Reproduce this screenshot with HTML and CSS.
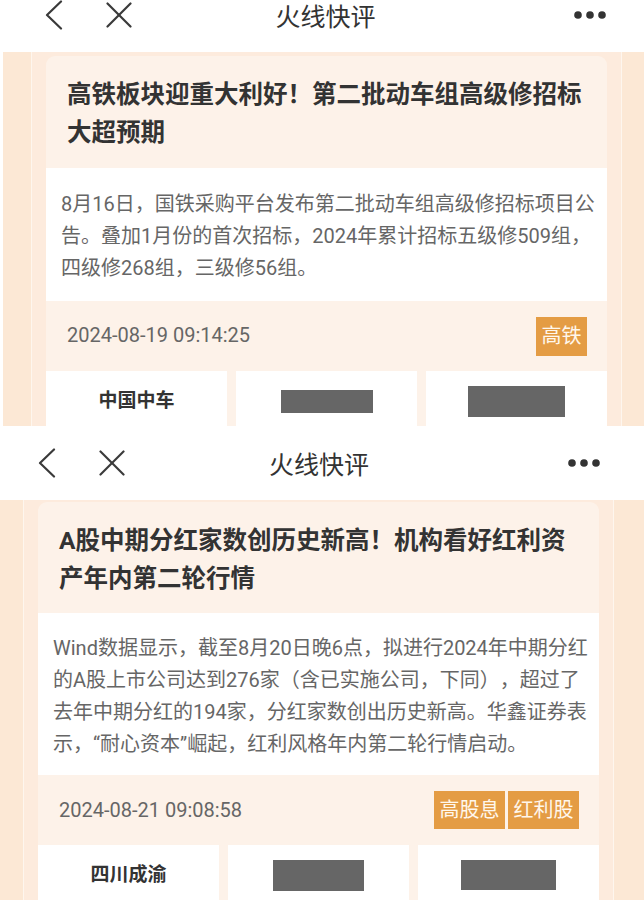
FILE: index.html
```html
<!DOCTYPE html>
<html lang="zh-CN">
<head>
<meta charset="utf-8">
<title>火线快评</title>
<link rel="stylesheet" href="styles.css">
</head>
<body>
<section class="shot shot-a">
  <header class="topbar">
    <div class="topbar-left">
      <svg class="icon-back" viewBox="0 0 18 30" width="18" height="30"><polyline points="16,1.5 2,15 16,28.5" /></svg>
      <svg class="icon-close" viewBox="0 0 26 26" width="26" height="26"><line x1="1.5" y1="1.5" x2="24.5" y2="24.5" /><line x1="24.5" y1="1.5" x2="1.5" y2="24.5" /></svg>
    </div>
    <h1 class="topbar-title">火线快评</h1>
    <div class="topbar-right">
      <svg class="icon-more" viewBox="0 0 32 8" width="32" height="8"><circle cx="4" cy="4" r="3.8" /><circle cx="16" cy="4" r="3.8" /><circle cx="28" cy="4" r="3.8" /></svg>
    </div>
  </header>
  <div class="feed">
    <div class="frame">
      <article class="card">
        <h2 class="card-title">高铁板块迎重大利好！第二批动车组高级修招标大超预期</h2>
        <p class="card-body">8月16日，国铁采购平台发布第二批动车组高级修招标项目公告。叠加1月份的首次招标，2024年累计招标五级修509组，四级修268组，三级修56组。</p>
        <div class="card-foot">
          <span class="card-date">2024-08-19 09:14:25</span>
          <div class="tags"><span class="tag">高铁</span></div>
        </div>
        <div class="stocks">
          <div class="stock"><div class="stock-line"><span class="stock-name">中国中车</span></div></div>
          <div class="stock"><div class="stock-line"><span class="redact redact-1"></span></div></div>
          <div class="stock"><div class="stock-line"><span class="redact redact-2"></span></div></div>
        </div>
      </article>
    </div>
  </div>
</section>
<section class="shot shot-b">
  <header class="topbar">
    <div class="topbar-left">
      <svg class="icon-back" viewBox="0 0 18 30" width="18" height="30"><polyline points="16,1.5 2,15 16,28.5" /></svg>
      <svg class="icon-close" viewBox="0 0 26 26" width="26" height="26"><line x1="1.5" y1="1.5" x2="24.5" y2="24.5" /><line x1="24.5" y1="1.5" x2="1.5" y2="24.5" /></svg>
    </div>
    <h1 class="topbar-title">火线快评</h1>
    <div class="topbar-right">
      <svg class="icon-more" viewBox="0 0 32 8" width="32" height="8"><circle cx="4" cy="4" r="3.8" /><circle cx="16" cy="4" r="3.8" /><circle cx="28" cy="4" r="3.8" /></svg>
    </div>
  </header>
  <div class="feed">
    <div class="frame">
      <article class="card">
        <h2 class="card-title">A股中期分红家数创历史新高！机构看好红利资产年内第二轮行情</h2>
        <p class="card-body">Wind数据显示，截至8月20日晚6点，拟进行2024年中期分红的A股上市公司达到276家（含已实施公司，下同），超过了去年中期分红的194家，分红家数创出历史新高。华鑫证券表示，“耐心资本”崛起，红利风格年内第二轮行情启动。</p>
        <div class="card-foot">
          <span class="card-date">2024-08-21 09:08:58</span>
          <div class="tags"><span class="tag">高股息</span><span class="tag">红利股</span></div>
        </div>
        <div class="stocks">
          <div class="stock"><div class="stock-line"><span class="stock-name">四川成渝</span></div></div>
          <div class="stock"><div class="stock-line"><span class="redact redact-3"></span></div></div>
          <div class="stock"><div class="stock-line"><span class="redact redact-4"></span></div></div>
        </div>
      </article>
    </div>
  </div>
</section>
</body>
</html>
```
FILE: styles.css
```css
* { box-sizing: border-box; }

html, body {
  margin: 0;
  padding: 0;
  background: #ffffff;
}

body {
  width: 644px;
  font-family: Roboto, "Noto Sans CJK SC", sans-serif;
  color: #333333;
  text-spacing-trim: space-all;
}

.shot {
  overflow: hidden;
  background: #ffffff;
}

.shot-a { height: 426px; }
.shot-b { height: 474px; }

/* top navigation bar */
.topbar {
  height: 74px;
  display: grid;
  grid-template-columns: 1fr auto 1fr;
  align-items: center;
  background: #ffffff;
}

.shot-a .topbar {
  margin-top: -22px;
  padding: 0 38px 0 45px;
}

.shot-b .topbar {
  padding: 0 44px 0 38px;
}

.topbar-left {
  display: flex;
  align-items: center;
  gap: 43px;
}

.topbar-right {
  display: flex;
  justify-content: flex-end;
  align-items: center;
}

.topbar-title {
  margin: 0;
  font-family: "Noto Sans CJK SC", sans-serif;
  font-size: 25px;
  font-weight: 400;
  line-height: 25px;
  color: #333333;
}

.icon-back polyline,
.icon-close line {
  fill: none;
  stroke: #3a3a3a;
  stroke-width: 2.2;
  stroke-linecap: round;
  stroke-linejoin: round;
}

.icon-back, .icon-close, .icon-more { display: block; }

.icon-more circle { fill: #333333; }

/* feed background */
.feed {
  background: #fce8d5;
}

.shot-a .feed {
  margin-left: 3px;
  padding-left: 28px;
}

.shot-b .feed {
  padding-left: 23px;
}

.frame {
  width: 591px;
  background: #fdebdd;
  border-left: 1px solid #fef6ee;
  border-right: 1px solid #fef6ee;
  padding: 4px 14px 200px;
}

.shot-b .frame { padding-top: 2px; }

/* card */
.card {
  background: #fdf2e9;
  border-radius: 9px 9px 0 0;
}

.card-title {
  margin: 0;
  padding: 20px 21px 16px 21px;
  font-family: Roboto, "Noto Sans CJK SC", sans-serif;
  font-size: 24.5px;
  font-weight: 700;
  line-height: 38px;
  color: #333333;
}

.shot-b .card-title { padding-bottom: 15px; }

.card-body {
  margin: 0;
  background: #ffffff;
  padding: 20px 10px 17px 15px;
  font-size: 20px;
  line-height: 32px;
  color: #666666;
}

.shot-b .card-body { padding-top: 19px; padding-bottom: 15px; }

.card-foot {
  height: 70px;
  display: flex;
  align-items: center;
  justify-content: space-between;
  padding: 0 20px 0 21px;
}

.card-date {
  font-size: 20px;
  line-height: 24px;
  color: #666666;
}

.shot-a .card-date { margin-top: -3px; }

.tags {
  display: flex;
  gap: 3px;
}

.tag {
  display: block;
  padding: 0 5.5px;
  height: 39px;
  line-height: 39px;
  font-size: 20px;
  background: #e49c44;
  color: #fff7ec;
}

.shot-b .tag {
  height: 38px;
  line-height: 38px;
}

/* related stocks */
.stocks {
  display: grid;
  grid-template-columns: repeat(3, 1fr);
  gap: 9px;
}

.stock {
  background: #ffffff;
  padding: 18px 0 40px;
}

.stock-line {
  height: 24px;
  display: flex;
  align-items: center;
  justify-content: center;
}

.stock-name {
  font-size: 19px;
  font-weight: 700;
  line-height: 24px;
  color: #333333;
}

.redact {
  display: block;
  flex: none;
  background: #666666;
}

.redact-1 { width: 92px; height: 23px; }
.redact-2 { width: 97px; height: 31px; }
.redact-3 { width: 91px; height: 31px; }
.redact-4 { width: 95px; height: 30px; }
```
